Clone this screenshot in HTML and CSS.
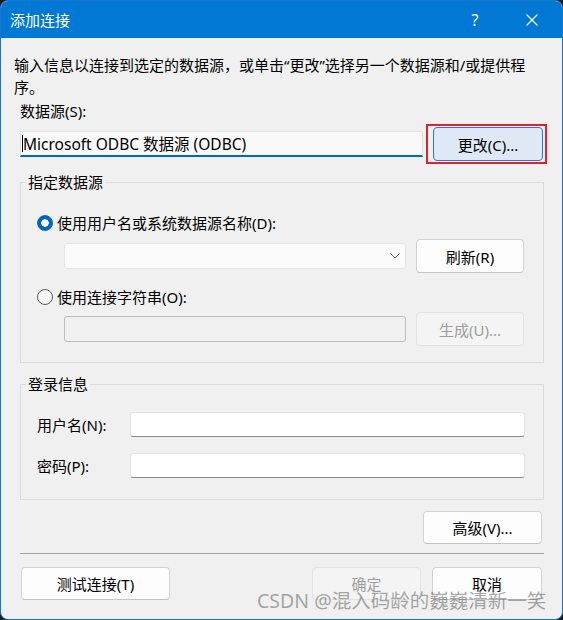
FILE: index.html
```html
<!DOCTYPE html>
<html lang="zh-CN">
  <head>
  <meta charset="UTF-8">
  <title>添加连接</title>
  <link rel="stylesheet" href="styles.css">
  </head>
  <body>
    <div class="window">
      <div class="titlebar">
        <span class="title">添加连接</span>
        <span class="help">?</span>
        <span class="close">
          <svg width="12" height="12" viewBox="0 0 12 12"><path d="M0.5 0.5 L11.5 11.5 M11.5 0.5 L0.5 11.5" stroke="#fff" stroke-width="1.1" fill="none"/></svg>
        </span>
      </div>

      <div class="content">
        <p class="intro">输入信息以连接到选定的数据源，或单击“更改”选择另一个数据源和/或提供程<br>序。</p>

        <div class="label">数据源(S):</div>
        <div class="source-row">
          <div class="source-field"><span class="caret"></span>Microsoft ODBC 数据源 (ODBC)</div>
          <span class="marked"><button class="btn btn-focus">更改(C)...</button></span>
        </div>

        <fieldset class="group group-source">
          <legend>指定数据源</legend>
          <div class="radio-row"><span class="radio checked"></span>使用用户名或系统数据源名称(D):</div>
          <div class="sub-row">
            <div class="combo">
              <svg width="10" height="6" viewBox="0 0 10 6"><path d="M0.5 0.5 L5 5 L9.5 0.5" stroke="#606060" fill="none"/></svg>
            </div>
            <button class="btn btn-side">刷新(R)</button>
          </div>
          <div class="radio-row second"><span class="radio"></span>使用连接字符串(O):</div>
          <div class="sub-row tight">
            <div class="text-disabled"></div>
            <button class="btn btn-side btn-disabled">生成(U)...</button>
          </div>
        </fieldset>

        <fieldset class="group group-login">
          <legend>登录信息</legend>
          <div class="field-row">
            <label for="user">用户名(N):</label>
            <input type="text" id="user">
          </div>
          <div class="field-row">
            <label for="pass">密码(P):</label>
            <input type="password" id="pass">
          </div>
        </fieldset>

        <div class="advanced-row">
          <button class="btn btn-advanced">高级(V)...</button>
        </div>

        <hr class="separator">

        <div class="footer">
          <button class="btn btn-test">测试连接(T)</button>
          <span class="spacer"></span>
          <button class="btn btn-ok btn-disabled">确定</button>
          <button class="btn btn-cancel">取消</button>
        </div>
      </div>

      <div class="watermark">CSDN @混入码龄的巍巍清新一笑</div>
    </div>
  </body>
</html>
```

FILE: styles.css
```css
body {
    margin: 0;
    background: #1c1c1c;
    font-family: "Noto Sans", "Noto Sans CJK SC", sans-serif;
    font-size: 15px;
    color: #000;
}

.window {
    position: relative;
    width: 563px;
    height: 620px;
    box-sizing: border-box;
    border: 1px solid #1a76cc;
    border-radius: 8px;
    background: #f0f0f0;
    overflow: hidden;
}

.titlebar {
    display: flex;
    align-items: center;
    height: 37px;
    margin-top: -1px;
    padding-top: 1px;
    padding-left: 9px;
    padding-right: 7px;
    background: #0078d4;
    color: #fff;
}

.title {
    flex: 1;
    line-height: 22px;
}

.help {
    width: 46px;
    margin-right: 11px;
    text-align: center;
    font-size: 16px;
}

.close {
    display: flex;
    justify-content: center;
    width: 46px;
}

.content {
    padding: 0 18px 0 19px;
}

.intro {
    margin: 16px 0 0 -6px;
    line-height: 22px;
    white-space: nowrap;
}

.label {
    margin-top: 2px;
    line-height: 22px;
}

.source-row {
    display: flex;
    align-items: center;
    gap: 10px;
    margin-top: 5px;
}

.source-field {
    flex: 1;
    display: flex;
    align-items: center;
    height: 26px;
    box-sizing: border-box;
    padding-left: 1px;
    background: #f9f9f9;
    border: 1px solid #e2e2e2;
    border-bottom: 2px solid #0067c0;
    font-size: 15.5px;
    white-space: nowrap;
}

.caret {
    width: 1px;
    height: 17px;
    background: #000;
}

.marked {
    position: relative;
    display: flex;
    margin-right: 1px;
}

.marked::after {
    content: "";
    position: absolute;
    left: -7px;
    top: -3px;
    right: -4px;
    bottom: -3px;
    border: 2px solid #e0202a;
}

.btn {
    height: 34px;
    padding: 0;
    font: inherit;
    color: #000;
    background: #fdfdfd;
    border: 1px solid #d3d3d3;
    border-bottom-color: #c4c4c4;
    border-radius: 4px;
}

.btn-focus {
    width: 110px;
    background: #dfe9f5;
    border: 1px solid #2a78cc;
}

.btn-disabled {
    color: #9d9d9d;
    background: #f4f4f4;
    border-color: #e2e2e2;
}

.group {
    margin: 10px 0 0;
    min-width: 0;
    border: 1px solid #dadada;
}

.group legend {
    margin-left: -11px;
    padding: 0 2px;
    line-height: 22px;
}

.group-source {
    padding: 19px 19px 16px 16px;
}

.radio-row {
    display: flex;
    align-items: center;
    line-height: 22px;
}

.radio-row.second {
    margin-top: 13px;
}

.radio {
    width: 16px;
    height: 16px;
    box-sizing: border-box;
    margin-right: 4px;
    border: 1px solid #5c5c5c;
    border-radius: 50%;
    background: #f6f6f6;
}

.radio.checked {
    border-color: #0067c0;
    background: radial-gradient(circle, #fff 0 3.5px, #0067c0 4px);
}

.sub-row {
    display: flex;
    align-items: center;
    gap: 10px;
    margin: 5px 0 0 27px;
}

.sub-row.tight {
    margin-top: 4px;
}

.combo {
    flex: 1;
    display: flex;
    align-items: center;
    justify-content: flex-end;
    height: 26px;
    box-sizing: border-box;
    padding-right: 5px;
    background: #fbfbfb;
    border: 1px solid #e3e3e3;
    border-radius: 3px;
}

.text-disabled {
    flex: 1;
    height: 26px;
    box-sizing: border-box;
    background: #f0f0f0;
    border: 1px solid #bdbdbd;
    border-radius: 3px;
}

.btn-side {
    width: 108px;
}

.group-login {
    padding: 17px 18px 21px 16px;
}

.field-row {
    display: flex;
    align-items: center;
}

.field-row + .field-row {
    margin-top: 16px;
}

.field-row label {
    width: 93px;
    line-height: 22px;
}

.field-row input {
    flex: 1;
    height: 25px;
    box-sizing: border-box;
    background: #fff;
    border: 1px solid #e3e3e3;
    border-bottom-color: #8a8a8a;
    border-radius: 3px;
    outline: none;
}

.advanced-row {
    display: flex;
    justify-content: flex-end;
    margin-top: 11px;
    padding-right: 2px;
}

.btn-advanced {
    width: 119px;
    height: 33px;
}

.separator {
    margin: 9px 0 0;
    border: 0;
    border-top: 1px solid #a3a3a3;
}

.footer {
    display: flex;
    gap: 11px;
    margin-top: 13px;
    padding: 0 2px 0 1px;
}

.footer .btn {
    height: 33px;
}

.spacer {
    flex: 1;
}

.btn-test {
    width: 149px;
}

.btn-ok {
    width: 109px;
}

.btn-cancel {
    width: 110px;
}

.watermark {
    position: absolute;
    left: 256px;
    top: 587px;
    font-size: 19.5px;
    line-height: 26px;
    color: rgba(95, 95, 95, 0.55);
    white-space: nowrap;
}
```
